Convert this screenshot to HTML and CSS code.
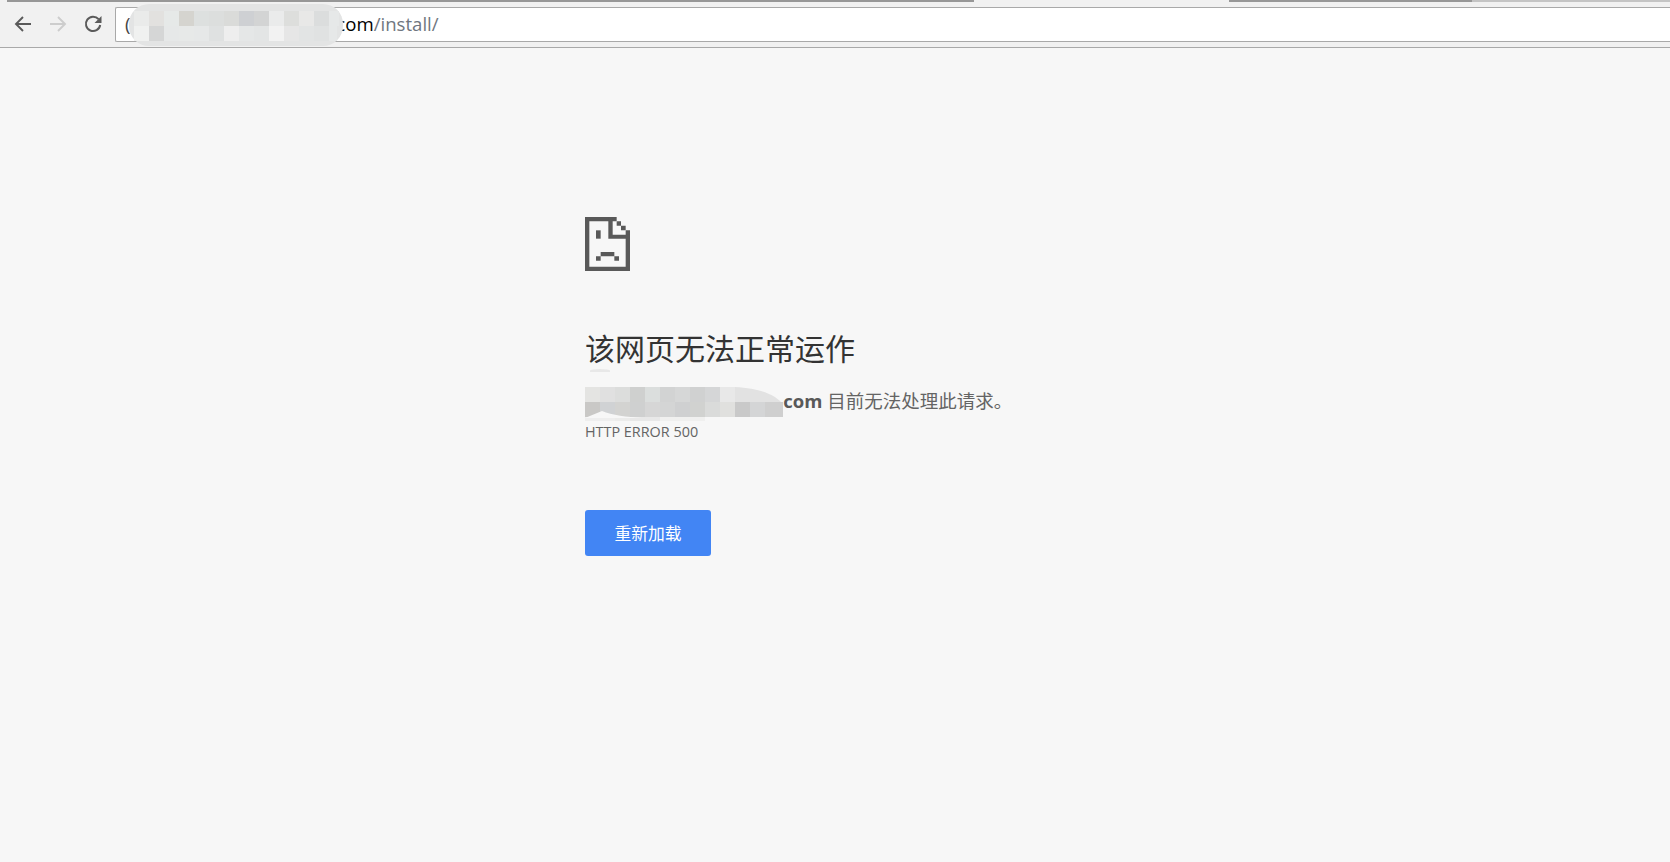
FILE: index.html
```html
<!DOCTYPE html>
<html lang="zh-CN">
<head>
<meta charset="utf-8">
<title>该网页无法正常运作</title>
<link rel="stylesheet" href="styles.css">
</head>
<body>
<header class="chrome">
  <div class="tabstrip">
    <div class="tab tab-a"></div>
    <div class="tab tab-b"></div>
    <div class="tab tab-b"></div>
    <div class="tab tab-c"></div>
    <div class="tab-gap"></div>
    <div class="tab tab-b"></div>
    <div class="tab-rest"></div>
  </div>
  <div class="toolbar">
    <nav class="nav">
      <button class="nav-btn">
        <svg width="18" height="18" viewBox="0 0 18 18"><path d="M17 9H2.5M9 2 2 9l7 7" fill="none" stroke="#5a5a5a" stroke-width="1.9"/></svg>
      </button>
      <button class="nav-btn">
        <svg width="18" height="18" viewBox="0 0 18 18"><path d="M1 9h14.500M9 2l7 7-7 7" fill="none" stroke="#cdcdcd" stroke-width="1.900"/></svg>
      </button>
      <button class="nav-btn">
        <svg width="18" height="18" viewBox="0 0 18 18"><path d="M14.600 4.200A7.200 7.200 0 1 0 16.200 10" fill="none" stroke="#5a5a5a" stroke-width="2"/><path d="M17.500 1v7h-7z" fill="#5a5a5a"/></svg>
      </button>
    </nav>
    <div class="omnibox">
      <span class="scheme">(</span><span class="host">.com</span><span class="path">/install/</span>
    </div>
    <svg class="mask mask-url" width="214" height="42" viewBox="0 0 214 42">
      <rect width="214" height="42" rx="20" fill="#e3e4e4"/>
      <g shape-rendering="crispEdges">
        <rect x="5" y="7" width="15" height="15" fill="#eaebea"/><rect x="20" y="7" width="15" height="15" fill="#e2e1df"/><rect x="35" y="7" width="15" height="15" fill="#e6e9e8"/><rect x="50" y="7" width="15" height="15" fill="#d5d4cf"/><rect x="65" y="7" width="15" height="15" fill="#dde0df"/><rect x="80" y="7" width="15" height="15" fill="#dcdedd"/><rect x="95" y="7" width="15" height="15" fill="#dadbd9"/><rect x="110" y="7" width="15" height="15" fill="#ced0d3"/><rect x="125" y="7" width="15" height="15" fill="#d3d4d4"/><rect x="140" y="7" width="15" height="15" fill="#eaebeb"/><rect x="155" y="7" width="15" height="15" fill="#dddedc"/><rect x="170" y="7" width="15" height="15" fill="#e8e8e7"/><rect x="185" y="7" width="15" height="15" fill="#dbdddd"/><rect x="200" y="7" width="10" height="15" fill="#e6e8e8"/>
        <rect x="5" y="22" width="15" height="15" fill="#f0f1f0"/><rect x="20" y="22" width="15" height="15" fill="#d5d6d6"/><rect x="35" y="22" width="15" height="15" fill="#e6e8e8"/><rect x="50" y="22" width="15" height="15" fill="#e7e9e8"/><rect x="65" y="22" width="15" height="15" fill="#e6e8e8"/><rect x="80" y="22" width="15" height="15" fill="#dfe1e1"/><rect x="95" y="22" width="15" height="15" fill="#eeeeee"/><rect x="110" y="22" width="15" height="15" fill="#e5e7e7"/><rect x="125" y="22" width="15" height="15" fill="#e3e5e5"/><rect x="140" y="22" width="15" height="15" fill="#f2f2f2"/><rect x="155" y="22" width="15" height="15" fill="#e6e6e6"/><rect x="170" y="22" width="15" height="15" fill="#e2e4e4"/><rect x="185" y="22" width="15" height="15" fill="#e0e2e2"/><rect x="200" y="22" width="8" height="15" fill="#e6e8e8"/>
      </g>
    </svg>
  </div>
</header>

<main class="content">
  <svg class="sad-page" width="45" height="54" viewBox="0 0 135 162">
    <path fill="#595959" d="M0 0H95V13H13V149H122V40H135V162H0Z"/>
    <path fill="#595959" d="M70 0H83V53H135V65H70Z"/>
    <path fill="#595959" d="M95 13H108V26H95ZM108 26H122V40H108Z"/>
    <path fill="#595959" d="M33 40H47V65H33Z"/>
    <path fill="#595959" d="M47 105H88V118H47ZM33 118H47V131H33ZM88 118H102V131H88Z"/>
  </svg>
  <h1 class="title">该网页无法正常运作</h1>
  <div class="details">
    <p class="message"><strong class="domain">.com</strong> 目前无法处理此请求。</p>
    <div class="code">HTTP ERROR 500</div>
    <div class="smudge"></div>
    <svg class="mask mask-domain" width="202" height="40" viewBox="0 0 202 40">
      <g shape-rendering="crispEdges">
        <rect x="0" y="0" width="15" height="15" fill="#e4e4e2"/><rect x="15" y="0" width="15" height="15" fill="#e0e0e0"/><rect x="30" y="0" width="15" height="15" fill="#dcdddc"/><rect x="45" y="0" width="15" height="15" fill="#cfd0cf"/><rect x="60" y="0" width="15" height="15" fill="#dbdedd"/><rect x="75" y="0" width="15" height="15" fill="#d2d3d3"/><rect x="90" y="0" width="15" height="15" fill="#d6d7d7"/><rect x="105" y="0" width="15" height="15" fill="#d0d1d1"/><rect x="120" y="0" width="15" height="15" fill="#d5d6d7"/><rect x="135" y="0" width="15" height="15" fill="#e8e8e8"/>
        <rect x="0" y="15" width="15" height="15" fill="#c9c8c6"/><rect x="15" y="15" width="15" height="15" fill="#d0d2d4"/><rect x="30" y="15" width="15" height="15" fill="#d3d3d1"/><rect x="45" y="15" width="15" height="15" fill="#cfd0d0"/><rect x="60" y="15" width="15" height="15" fill="#d6d6d6"/><rect x="75" y="15" width="15" height="15" fill="#d4d5d5"/><rect x="90" y="15" width="15" height="15" fill="#cfd0d1"/><rect x="105" y="15" width="15" height="15" fill="#d1d2d0"/><rect x="120" y="15" width="15" height="15" fill="#dadbda"/><rect x="135" y="15" width="15" height="15" fill="#e0e0de"/><rect x="150" y="15" width="15" height="15" fill="#c9c9c9"/><rect x="165" y="15" width="15" height="15" fill="#d4d5d6"/><rect x="180" y="15" width="18" height="15" fill="#cfcfcf"/>
        <rect x="0" y="30" width="30" height="4" fill="#eeeeee"/><rect x="30" y="30" width="15" height="4" fill="#ececeb"/><rect x="45" y="30" width="30" height="4" fill="#e8e8e8"/><rect x="75" y="30" width="45" height="4" fill="#f0f0ef"/>
      </g>
      <path d="M150 0C165 1 176 3 184 7C191 10 194 13 196 15H150Z" fill="#e2e2e2"/>
      <path d="M0 31L17 24C27 28 42 30 57 31Z" fill="#f7f7f7"/>
    </svg>
  </div>
  <button class="reload">重新加载</button>
</main>
</body>
</html>
```
FILE: styles.css
```css
* { box-sizing: border-box; }
html, body { height: 100%; }
body {
  margin: 0;
  background: #f7f7f7;
  overflow: hidden;
  font-family: "Open Sans", "Noto Sans CJK SC", sans-serif;
}
.chrome {
  background: #f1f1f1;
  border-bottom: 1px solid #a9a9a9;
}
.tabstrip {
  display: flex;
  height: 7px;
  padding-left: 7px;
}
.tab { height: 2px; background: #979797; }
.tab-a { width: 257px; }
.tab-b { width: 243px; }
.tab-c { width: 224px; }
.tab-gap { width: 255px; }
.tab-rest { flex: 1; height: 2px; background: #c4c4c4; }
.toolbar {
  display: flex;
  height: 40px;
  position: relative;
}
.nav {
  display: flex;
  width: 115px;
  padding: 8px 0 0 5px;
  align-items: flex-start;
}
.nav-btn {
  width: 35px;
  height: 18px;
  padding: 0;
  border: 0;
  background: none;
  display: flex;
  justify-content: center;
}
.omnibox {
  flex: 1;
  height: 35px;
  background: #fff;
  border: 1px solid #a9a9a9;
  border-right: 0;
  border-radius: 2px 0 0 2px;
  padding-left: 9px;
  font-size: 18.6px;
  line-height: 32px;
  white-space: nowrap;
}
.scheme { color: #444; }
.host { color: #000; margin-left: 201px; }
.path { color: #6f7680; }
.mask { position: absolute; display: block; }
.mask-url { left: 129px; top: -3px; }
.content {
  padding: 169px 0 0 585px;
}
.sad-page { display: block; }
.title {
  margin: 56px 0 0;
  font-size: 30px;
  font-weight: 400;
  line-height: 44px;
  color: #333;
}
.details {
  position: relative;
  margin-top: 15px;
  color: #646464;
}
.message {
  margin: 0;
  padding-top: 1px;
  font-size: 18.5px;
  line-height: 28px;
}
.domain {
  margin-left: 193px;
  font-weight: 700;
  color: #595959;
}
.code {
  margin-top: 7px;
  font-size: 14.4px;
  line-height: 20px;
  color: #646464;
}
.smudge {
  position: absolute;
  left: 5px;
  top: -17px;
  width: 20px;
  height: 3px;
  border-radius: 50% 50% 0 0;
  background: #e8e8e8;
}
.mask-domain { left: 0; top: 1px; }
.reload {
  display: block;
  width: 126px;
  height: 46px;
  margin-top: 68px;
  padding: 0;
  border: 0;
  border-radius: 3px;
  background: #4285f4;
  color: #fff;
  font-family: inherit;
  font-size: 16.800px;
}
```
